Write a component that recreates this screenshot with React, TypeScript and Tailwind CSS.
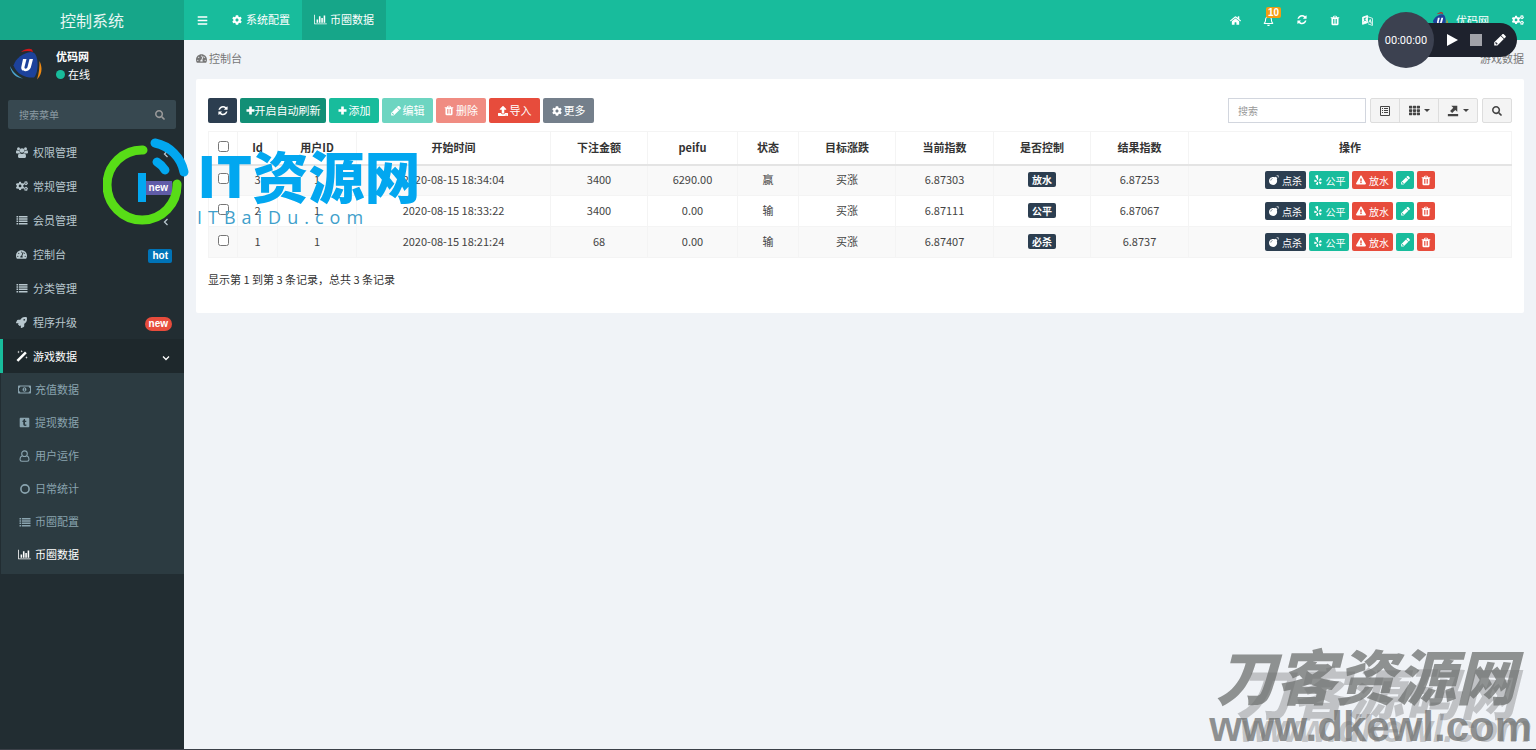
import type { ReactNode } from "react";
import {
  FaBars, FaBomb, FaCog, FaCogs, FaExclamationTriangle, FaExpand, FaHome,
  FaRegBell, FaRegMoneyBillAlt, FaRocket,
  FaSearch, FaTachometerAlt, FaTh, FaTumblrSquare, FaUpload, FaYelp,
} from "react-icons/fa";

const BarChart = ({ className = "" }: { className?: string }) => (
  <svg viewBox="0 0 2048 1792" fill="currentColor" aria-hidden="true" className={`h-[11px] w-[13px] ${className}`}>
    <path d="M640 896v512h-256v-512h256zm384-512v1024h-256v-1024h256zm1024 1152v128h-2048v-1536h128v1408h1920zm-640-896v768h-256v-768h256zm384-384v1152h-256v-1152h256z" />
  </svg>
);

const Refresh = () => (
  <svg viewBox="0 0 1536 1664" fill="currentColor" aria-hidden="true" className="size-[10px]">
    <path d="M1511 928q0 5-1 7-64 268-268 434.5t-478 166.5q-146 0-282.5-55t-243.5-157l-129 129q-19 19-45 19t-45-19-19-45v-448q0-26 19-45t45-19h448q26 0 45 19t19 45-19 45l-137 137q71 66 161 102t187 36q134 0 250-65t186-179q11-17 53-117 8-23 30-23h192q13 0 22.5 9.5t9.5 22.5zm25-800v448q0 26-19 45t-45 19h-448q-26 0-45-19t-19-45 19-45l138-138q-148-137-349-137-134 0-250 65t-186 179q-11 17-53 117-8 23-30 23h-199q-13 0-22.5-9.5t-9.5-22.5v-7q65-268 270-434.5t480-166.5q146 0 284 55.5t245 156.5l130-129q19-19 45-19t45 19 19 45z" />
  </svg>
);

const Trash = () => (
  <svg viewBox="128 0 1536 1792" fill="currentColor" aria-hidden="true" className="h-[11px] w-[10px]">
    <path d="M704 1376v-704q0-14-9-23t-23-9h-64q-14 0-23 9t-9 23v704q0 14 9 23t23 9h64q14 0 23-9t9-23zm256 0v-704q0-14-9-23t-23-9h-64q-14 0-23 9t-9 23v704q0 14 9 23t23 9h64q14 0 23-9t9-23zm256 0v-704q0-14-9-23t-23-9h-64q-14 0-23 9t-9 23v704q0 14 9 23t23 9h64q14 0 23-9t9-23zm-544-992h448l-48-117q-7-9-17-11h-317q-10 2-17 11zm928 32v64q0 14-9 23t-23 9h-96v948q0 83-47 143.5t-113 60.5h-832q-66 0-113-58.5t-47-141.5v-952h-96q-14 0-23-9t-9-23v-64q0-14 9-23t23-9h309l70-167q15-37 54-63t79-26h320q40 0 79 26t54 63l70 167h309q14 0 23 9t9 23z" />
  </svg>
);

const Pencil = ({ className = "size-[10px]" }: { className?: string }) => (
  <svg viewBox="100 200 1560 1500" fill="currentColor" aria-hidden="true" className={className}>
    <path d="M491 1536l91-91-235-235-91 91v107h128v128h107zM960 416l416 416-832 832h-416v-416zm683 96q0 53-37 90l-166 166-416-416 166-165q36-38 90-38 53 0 91 38l235 234q37 39 37 91z" />
  </svg>
);

const Plus = () => (
  <svg viewBox="0 0 9 9" fill="currentColor" aria-hidden="true" className="size-[9px]">
    <path d="M3.200.500h2.600v2.700h2.700v2.600H5.800v2.700H3.200V5.800H.500V3.200h2.700z" />
  </svg>
);

const List = () => (
  <svg viewBox="0 0 12 10" fill="currentColor" aria-hidden="true" className="h-[10px] w-3">
    <path d="M.500 1h1.700v1.500H.500zM3 1h8.500v1.500H3zM.500 3.300h1.700v1.500H.500zM3 3.300h8.500v1.500H3zM.500 5.600h1.700v1.500H.500zM3 5.600h8.500v1.500H3zM.500 7.900h1.700v1.500H.500zM3 7.900h8.500v1.500H3z" />
  </svg>
);

const Users = () => (
  <svg viewBox="0 0 24 22" fill="currentColor" aria-hidden="true" className="h-[11px] w-3">
    <circle cx="5" cy="3.500" r="3" />
    <circle cx="19" cy="3.500" r="3" />
    <circle cx="12" cy="7" r="4.600" />
    <path d="M2 6.500c2 1.400 4 1.200 5 .700 0 2 .500 3.200 1.300 4.300C7 11.500 6 12 5 13H2.500C1 13 0 12.300 0 11c0-2 .300-4.500 2-4.500zM22 6.500c-2 1.400-4 1.200-5 .700 0 2-.500 3.200-1.300 4.300 1.300 0 2.300.500 3.300 1.500h2.500c1.500 0 2.500-.700 2.500-2 0-2-.300-4.500-2-4.500z" />
    <path d="M8 12.500c2.500 1.800 5.500 1.800 8 0 3 0 4 3 4 6.500 0 1.800-1.200 3-3 3H7c-1.800 0-3-1.200-3-3 0-3.500 1-6.500 4-6.500z" />
  </svg>
);

const Wand = () => (
  <svg viewBox="0 0 24 24" fill="currentColor" aria-hidden="true" className="size-3">
    <path d="M1 20L18 3l3.500 3.500-17 17z" />
    <path d="M5 1l.700 2.300L8 4l-2.300.700L5 7l-.700-2.300L2 4l2.300-.700zM11.500 0l.700 1.800 1.800.700-1.800.700-.700 1.800-.700-1.800L9 2.500l1.800-.700zM21 12l.700 2.300 2.300.700-2.300.700L21 18l-.700-2.300L18 15l2.300-.700z" />
  </svg>
);

const UserOutline = () => (
  <svg viewBox="0 0 11 12" fill="none" stroke="currentColor" strokeWidth="1.100" aria-hidden="true" className="h-3 w-[11px]">
    <circle cx="5.500" cy="3.700" r="2.800" />
    <path d="M3 6C1.500 6.500 1 7.800 1 9.300c0 1.300.600 2 1.800 2h5.400c1.200 0 1.800-.700 1.800-2C10 7.800 9.500 6.500 8 6" />
  </svg>
);

const Ring = () => (
  <svg viewBox="0 0 10 10" fill="none" stroke="currentColor" strokeWidth="1.600" aria-hidden="true" className="size-[10px]">
    <circle cx="5" cy="5" r="4.100" />
  </svg>
);

const Chevron = ({ d }: { d: string }) => (
  <svg viewBox="0 0 8 8" fill="none" stroke="currentColor" strokeWidth="1.300" aria-hidden="true" className="mr-[2px] size-2">
    <path d={d} />
  </svg>
);

const Caret = () => (
  <svg viewBox="0 0 6 3" fill="currentColor" aria-hidden="true" className="h-[3px] w-[6px]">
    <path d="M0 0h6L3 3z" />
  </svg>
);

const Translate = () => (
  <svg viewBox="0 0 20 20" fill="none" stroke="currentColor" strokeWidth="1.5" aria-hidden="true" className="size-[11px]">
    <path d="M1 4l9-3v13l-9 3z" fill="currentColor" />
    <path d="M10 3l9 3v13l-8-3M12 14l3-6 2 8M13 12l4 1" />
    <path d="M3 7l5-2M5.500 5c0 4-1 6-2.500 7M4 8l4 3" stroke="#18bc9c" />
  </svg>
);

const ListAlt = () => (
  <svg viewBox="0 0 12 12" fill="none" stroke="currentColor" aria-hidden="true" className="size-3">
    <path d="M1.500 1.500h9v9h-9z" />
    <path d="M3 3.500h1M3 5.500h1M3 7.500h1M5 3.500h4M5 5.500h4M5 7.500h4" />
  </svg>
);

const Export = () => (
  <svg viewBox="0 0 14 14" fill="currentColor" aria-hidden="true" className="size-3">
    <path d="M5 1h7v7L9.700 5.700 6 9.400 3.600 7 7.300 3.300zM1 10.500h12v2.500H1z" />
  </svg>
);

const Logo = ({ className = "" }: { className?: string }) => (
  <svg viewBox="0 0 32 32" aria-hidden="true" className={className}>
    <path d="M11 4C15 .500 20 0 22 1.500l1 2.500C19 2.500 15 3 11 4z" fill="#d0161b" />
    <path d="M0 18c1 7 6 12 13 12.500C7 28 3 24 0 18z" fill="#4aa3cf" />
    <path d="M29.500 13c3 6 3 13-2.500 18.500 2-6 2.500-12 2.500-18.500z" fill="#f08a12" />
    <path d="M3.500 17.500C6 10 13 5 21 4c4 0 6 4 6.500 10 .500 7-1 13-3.500 15.500C16 30 7 27 3.500 17.500z" fill="#1d429b" />
    <path d="M13 11h3.500l-2 8c-.500 2.200 2.500 2.200 3 0l2-8H23l-2.200 8.500c-1.500 5-10.500 5-9.500-.500z" fill="#fff" />
  </svg>
);

type MenuEntry = { label: string; icon: ReactNode; tail?: ReactNode; active?: boolean };

const tag = "block font-['Liberation_Sans',sans-serif] px-[4px] text-[10px] leading-[14px] font-bold text-white";

const mainMenu: MenuEntry[] = [
  { label: "权限管理", icon: <Users />, tail: <Chevron d="M5.500 1L2.500 4l3 3" /> },
  { label: "常规管理", icon: <FaCogs className="size-3" />, tail: <span className={`${tag} bg-[#605ca8]`}>new</span> },
  { label: "会员管理", icon: <List />, tail: <Chevron d="M5.500 1L2.500 4l3 3" /> },
  { label: "控制台", icon: <FaTachometerAlt />, tail: <span className={`${tag} rounded-xs bg-[#0073b7]`}>hot</span> },
  { label: "分类管理", icon: <List /> },
  { label: "程序升级", icon: <FaRocket />, tail: <span className={`${tag} rounded-full bg-[#e74c3c]`}>new</span> },
  { label: "游戏数据", icon: <Wand />, tail: <Chevron d="M1 2.500l3 3 3-3" />, active: true },
];

const subMenu: MenuEntry[] = [
  { label: "充值数据", icon: <FaRegMoneyBillAlt className="size-[13px]" /> },
  { label: "提现数据", icon: <FaTumblrSquare /> },
  { label: "用户运作", icon: <UserOutline /> },
  { label: "日常统计", icon: <Ring /> },
  { label: "币圈配置", icon: <List /> },
  { label: "币圈数据", icon: <BarChart />, active: true },
];

const columns: [string, string][] = [
  ["Id", "w-[40px]"],
  ["用户ID", "w-[79px]"],
  ["开始时间", "w-[194px]"],
  ["下注金额", "w-[97px]"],
  ["peifu", "w-[90px]"],
  ["状态", "w-[61px]"],
  ["目标涨跌", "w-[97px]"],
  ["当前指数", "w-[98px]"],
  ["是否控制", "w-[97px]"],
  ["结果指数", "w-[98px]"],
  ["操作", ""],
];

const rows = [
  ["3", "1", "2020-08-15 18:34:04", "3400", "6290.00", "赢", "买涨", "6.87303", "放水", "6.87253"],
  ["2", "1", "2020-08-15 18:33:22", "3400", "0.00", "输", "买涨", "6.87111", "公平", "6.87067"],
  ["1", "1", "2020-08-15 18:21:24", "68", "0.00", "输", "买涨", "6.87407", "必杀", "6.8737"],
];

const toolBtn = "flex h-[25px] items-center justify-center rounded-xs text-[11px] text-white";
const grayBtn = "flex h-[25px] items-center justify-center gap-1 border border-[#ddd] bg-[#f4f4f4] text-[#444]";
const rowBtn = "flex h-[18px] items-center justify-center gap-[3px] rounded-[2px] text-[10px] text-white";
const topItem = "relative flex h-10 w-[33px] items-center justify-center text-[11px]";

function Sidebar() {
  return (
    <aside className="flex w-[184px] shrink-0 flex-col bg-[#222d32] text-[11px]">
      <a href="#home" className="flex h-10 items-center justify-center bg-[#16a689] pb-px text-base text-white/90">控制系统</a>
      <div className="flex h-[60px] items-start gap-3.5 pt-2 pl-[10px]">
        <Logo className="size-8" />
        <div className="text-white">
          <p className="leading-[17px] font-bold">优码网</p>
          <p className="flex items-center gap-[3px] leading-[18px]">
            <span className="size-[9px] rounded-full bg-[#18bc9c]" />在线
          </p>
        </div>
      </div>
      <form className="mx-2 flex h-[29px] items-center rounded-xs bg-[#374850] pr-[11px] pl-[11px]">
        <input aria-label="搜索菜单" placeholder="搜索菜单" className="min-w-0 flex-1 bg-transparent text-[10px] text-white outline-none placeholder:text-[#8b9ba3]" />
        <button type="button" aria-label="搜索" className="text-[#999]"><FaSearch className="size-[10px]" /></button>
      </form>
      <nav className="pt-[6px]">
        {mainMenu.map((m) => (
          <a
            key={m.label}
            href="#menu"
            className={`flex h-[34px] items-center border-l-[3px] pr-3 pl-[13px] ${
              m.active ? "border-[#18bc9c] bg-[#1e282c] text-white" : "border-transparent text-[#b8c7ce]"
            }`}
          >
            <span className="flex w-[17px]">{m.icon}</span>
            <span className="flex-1">{m.label}</span>
            {m.tail && <span className="pt-[3px]">{m.tail}</span>}
          </a>
        ))}
        <div className="border-l border-[#222d32] bg-[#2c3b41] pb-[3px]">
          {subMenu.map((m) => (
            <a key={m.label} href="#sub" className={`flex h-[33px] items-center pl-[17px] ${m.active ? "text-white" : "text-[#8aa4af]"}`}>
              <span className="flex w-[17px] justify-start">
                <span className="flex w-[13px] justify-center">{m.icon}</span>
              </span>
              {m.label}
            </a>
          ))}
        </div>
      </nav>
    </aside>
  );
}

function TopBar() {
  return (
    <header className="flex h-10 items-center bg-[#18bc9c] text-[11px] text-white">
      <button type="button" aria-label="菜单" className="flex h-10 w-9 items-center justify-center"><FaBars /></button>
      <a href="#config" className="flex h-10 items-center gap-1 px-3 pb-px"><FaCog className="size-[10px]" />系统配置</a>
      <a href="#data" className="flex h-10 items-center gap-[3px] bg-[#16a689] px-3 pb-px"><BarChart />币圈数据</a>
      <div className="ml-auto flex items-center">
        <a href="#index" aria-label="首页" className={topItem}><FaHome /></a>
        <a href="#notice" aria-label="通知" className={topItem}>
          <FaRegBell />
          <span className="absolute top-[7px] left-[14px] rounded-xs bg-[#f39c12] px-[2px] font-['Liberation_Sans',sans-serif] text-[10px] leading-[11px] font-bold">10</span>
        </a>
        <a href="#refresh" aria-label="刷新" className={topItem}><Refresh /></a>
        <a href="#clear" aria-label="清除" className={topItem}><Trash /></a>
        <a href="#lang" aria-label="语言" className={topItem}><Translate /></a>
        <a href="#full" aria-label="全屏" className={topItem}><FaExpand /></a>
        <a href="#user" className="flex h-10 w-[83px] items-center gap-2 pl-[14px]"><Logo className="size-[17px]" />优码网</a>
        <a href="#settings" aria-label="设置" className="flex h-10 w-9 items-center justify-center"><FaCogs className="size-3" /></a>
      </div>
    </header>
  );
}

function Recorder() {
  return (
    <div className="absolute top-3 right-[19px] flex h-14 w-[139px] items-center">
      <div className="absolute inset-y-[11px] right-0 left-7 rounded-full bg-[#1e222d]" />
      <div className="relative flex size-14 items-center justify-center rounded-full bg-[#3c4150] pt-[3px] font-[Roboto,sans-serif] text-[11px] text-white">00:00:00</div>
      <div className="relative flex flex-1 items-center justify-between pr-[11px] pl-[13px]">
        <button type="button" aria-label="开始">
          <svg viewBox="0 0 11 12" className="block h-3 w-[11px]"><path d="M0 0l11 6-11 6z" fill="#fff" /></svg>
        </button>
        <button type="button" aria-label="停止" className="size-3 bg-[#a1a2a8]" />
        <button type="button" aria-label="画笔" className="text-white"><Pencil className="size-3" /></button>
      </div>
    </div>
  );
}

function Toolbar() {
  return (
    <div className="flex items-center justify-between">
      <div className="flex gap-[3px]">
        <button type="button" aria-label="刷新" className={`${toolBtn} w-[29px] bg-[#2c3e50]`}><Refresh /></button>
        <button type="button" className={`${toolBtn} w-[86px] bg-[#128f76]`}><Plus />开启自动刷新</button>
        <button type="button" className={`${toolBtn} w-[50px] gap-[2px] bg-[#18bc9c]`}><Plus />添加</button>
        <button type="button" disabled className={`${toolBtn} w-[51px] gap-[2px] bg-[#6dd5c1]`}><Pencil />编辑</button>
        <button type="button" disabled className={`${toolBtn} w-[50px] gap-[2px] bg-[#f08c82]`}><Trash />删除</button>
        <button type="button" className={`${toolBtn} w-[51px] gap-[2px] bg-[#e74c3c]`}><FaUpload className="size-[10px]" />导入</button>
        <button type="button" className={`${toolBtn} w-[51px] gap-[2px] bg-[#747f8b]`}><FaCog className="size-[10px]" />更多</button>
      </div>
      <div className="flex">
        <input aria-label="搜索" placeholder="搜索" className="h-[25px] w-[138px] border border-[#d2d6de] bg-white px-[9px] text-[10px] outline-none placeholder:text-[#999]" />
        <div className="ml-1 flex">
          <button type="button" aria-label="切换" className={`${grayBtn} w-[30px] rounded-l-xs`}><ListAlt /></button>
          <button type="button" aria-label="列" className={`${grayBtn} -ml-px w-10`}><FaTh className="size-[11px]" /><Caret /></button>
          <button type="button" aria-label="导出" className={`${grayBtn} -ml-px w-10 rounded-r-xs`}><Export /><Caret /></button>
        </div>
        <button type="button" aria-label="普通搜索" className={`${grayBtn} ml-1 w-[30px] rounded-xs`}><FaSearch className="size-[10px]" /></button>
      </div>
    </div>
  );
}

function RowActions() {
  return (
    <div className="flex justify-center gap-[3px]">
      <button type="button" className={`${rowBtn} w-[41px] bg-[#2c3e50]`}><FaBomb />点杀</button>
      <button type="button" className={`${rowBtn} w-[40px] bg-[#18bc9c]`}><FaYelp />公平</button>
      <button type="button" className={`${rowBtn} w-[41px] bg-[#e74c3c]`}><FaExclamationTriangle />放水</button>
      <button type="button" aria-label="编辑" className={`${rowBtn} w-[18px] bg-[#18bc9c]`}><Pencil className="size-[9px]" /></button>
      <button type="button" aria-label="删除" className={`${rowBtn} w-[18px] bg-[#e74c3c]`}><Trash /></button>
    </div>
  );
}

function DataTable() {
  return (
    <table className="mt-2 w-full table-fixed border-collapse border border-[#f4f4f4] text-center text-[11px] text-[#444]">
      <thead>
        <tr className="h-[33px] border-b-2 border-[#e4e4e4] text-[#333]">
          <th className="w-[29px]"><input type="checkbox" aria-label="全选" className="mx-auto mb-[3px] block size-[11px]" /></th>
          {columns.map(([name, width]) => (
            <th key={name} className={`${width} border-l border-[#f4f4f4] pb-[2px] font-bold`}>{name}</th>
          ))}
        </tr>
      </thead>
      <tbody>
        {rows.map((r) => (
          <tr key={r[0]} className="h-[31px] border-t border-[#f4f4f4] odd:bg-[#f9f9f9]">
            <td><input type="checkbox" aria-label={`选择 ${r[0]}`} className="mx-auto mb-[3px] block size-[11px]" /></td>
            {r.map((v, i) => (
              <td key={i} className="border-l border-[#f4f4f4] pb-[2px]">
                {i === 8 ? <span className="inline-block rounded-xs bg-[#2c3e50] px-1 text-[10px] leading-[15px] font-bold text-white">{v}</span> : v}
              </td>
            ))}
            <td className="border-l border-[#f4f4f4]"><RowActions /></td>
          </tr>
        ))}
      </tbody>
    </table>
  );
}

function SiteMark() {
  return (
    <div className="pointer-events-none absolute top-[136px] left-[103px] flex gap-[6px]">
      <svg viewBox="0 0 88 90" fill="none" strokeLinecap="round" aria-hidden="true" className="h-[90px] w-[88px]">
        <path d="M40 14A35 35 0 1 0 74 48" stroke="#58dd17" strokeWidth="9" />
        <path d="M52 7A37 37 0 0 1 81 36" stroke="#02a7f0" strokeWidth="9" />
        <path d="M54 26Q59 29 62 34" stroke="#02a7f0" strokeWidth="9" />
        <path d="M39 37v29" stroke="#02a7f0" strokeWidth="8" strokeLinecap="butt" />
      </svg>
      <div className="pt-[10px]">
        <p className="text-[56px] leading-[56px] font-black whitespace-nowrap text-[#02a7f0]">IT资源网</p>
        <p className="font-['Open_Sans',sans-serif] text-[18px] leading-[30px] tracking-[6px] text-[#3f9fcb]">ITBaiDu.com</p>
      </div>
    </div>
  );
}

function CornerMark() {
  return (
    <div className="pointer-events-none absolute right-1 bottom-1 grid items-end justify-items-end font-black whitespace-nowrap">
      <div className="col-start-1 row-start-1 text-right text-black/20">
        <p className="pr-4 text-[56px] leading-[44px] italic">刀客源码网</p>
        <p className="font-['Liberation_Sans',sans-serif] text-[38px] leading-8 italic">www.dkewl.com</p>
      </div>
      <div className="col-start-1 row-start-1 text-right text-[#6e706f]/75">
        <p className="pr-4 text-[60px] leading-[70px] italic">刀客资源网</p>
        <p className="font-['Liberation_Sans',sans-serif] text-[42px] leading-9">www.dkewl.com</p>
      </div>
    </div>
  );
}

export default function App() {
  return (
    <div className="relative flex min-h-screen overflow-hidden border-b border-[#3b4048] bg-[#f0f3f7] font-['Noto_Sans_CJK_SC',sans-serif]">
      <Sidebar />
      <div className="min-w-0 flex-1">
        <TopBar />
        <div className="flex h-[39px] items-center justify-between px-3 pb-[2px] text-[11px] text-[#777]">
          <a href="#dashboard" className="flex items-center gap-[2px]"><FaTachometerAlt />控制台</a>
          <span>游戏数据</span>
        </div>
        <main className="mx-3 rounded-xs bg-white px-3 pt-[19px] pb-[25px]">
          <Toolbar />
          <DataTable />
          <p className="pt-3 text-[11px] leading-[18px] text-[#333]">显示第 1 到第 3 条记录，总共 3 条记录</p>
        </main>
      </div>
      <CornerMark />
      <SiteMark />
      <Recorder />
    </div>
  );
}
